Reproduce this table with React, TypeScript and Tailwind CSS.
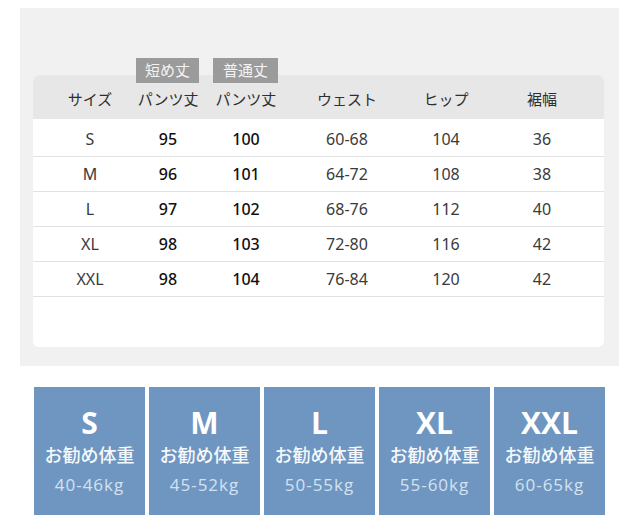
import React from "react";

const rows = [
  ["S", "95", "100", "60-68", "104", "36"],
  ["M", "96", "101", "64-72", "108", "38"],
  ["L", "97", "102", "68-76", "112", "40"],
  ["XL", "98", "103", "72-80", "116", "42"],
  ["XXL", "98", "104", "76-84", "120", "42"],
];

const headers = ["サイズ", "パンツ丈", "パンツ丈", "ウェスト", "ヒップ", "裾幅"];

const cards = [
  ["S", "40-46kg"],
  ["M", "45-52kg"],
  ["L", "50-55kg"],
  ["XL", "55-60kg"],
  ["XXL", "60-65kg"],
];

const grid = "grid grid-cols-[114px_42px_114px_88px_110px_82px]";

export default function App() {
  return (
    <div
      className="w-[640px] h-[528px] bg-white overflow-hidden"
      style={{ fontFamily: '"Noto Sans CJK JP", "Noto Sans", sans-serif' }}
    >
      <div className="ml-[20px] mt-[8px] w-[599px] h-[358px] bg-[#f1f1f1] pt-[67px] pl-[13px]">
        <div className="relative w-[571px] h-[272px] bg-white rounded-b-[6px] rounded-t-[6px]">
          <div className="absolute left-[103px] -top-[17px] w-[63px] h-[25px] bg-[#9b9b9b] text-[#f4f4f4] text-[15px] flex items-center justify-center">
            短め丈
          </div>
          <div className="absolute left-[180px] -top-[17px] w-[65px] h-[25px] bg-[#9b9b9b] text-[#f4f4f4] text-[15px] flex items-center justify-center">
            普通丈
          </div>
          <div className={`${grid} h-[44px] bg-[#e7e7e7] rounded-t-[6px] items-center pt-[4px]`}>
            {headers.map((h, i) => (
              <div key={i} className="flex justify-center whitespace-nowrap text-[15px] text-[#2e2e2e]">
                {h}
              </div>
            ))}
          </div>
          <div className="h-[3px]" />
          {rows.map((r, ri) => (
            <div
              key={ri}
              className={`${grid} h-[35px] items-center border-b border-[#e2e2e2]`}
              style={{ fontFamily: '"Noto Sans", "Open Sans", sans-serif' }}
            >
              {r.map((c, ci) => (
                <div
                  key={ci}
                  className={`flex justify-center whitespace-nowrap text-[16px] ${
                    ci === 1 || ci === 2 ? "text-[#111] font-medium" : "text-[#3a3a3a]"
                  }`}
                >
                  {c}
                </div>
              ))}
            </div>
          ))}
        </div>
      </div>
      <div className="ml-[34px] mt-[21px] flex gap-[4px]">
        {cards.map(([s, kg]) => (
          <div
            key={s}
            className="w-[111px] h-[128px] bg-[#6f96c1] flex flex-col items-center pt-[19px]"
          >
            <div
              className="text-[30px] leading-[34px] font-bold text-white"
              style={{ fontFamily: '"Open Sans", "Noto Sans", sans-serif' }}
            >
              {s}
            </div>
            <div className="text-[18px] leading-[26px] font-medium text-[#f5f8fb] mt-[1px] whitespace-nowrap">
              お勧め体重
            </div>
            <div
              className="text-[17px] leading-[26px] text-[#d3e2f1] mt-[5px] tracking-[1px]"
              style={{ fontFamily: '"Open Sans", "Noto Sans", sans-serif' }}
            >
              {kg}
            </div>
          </div>
        ))}
      </div>
    </div>
  );
}
